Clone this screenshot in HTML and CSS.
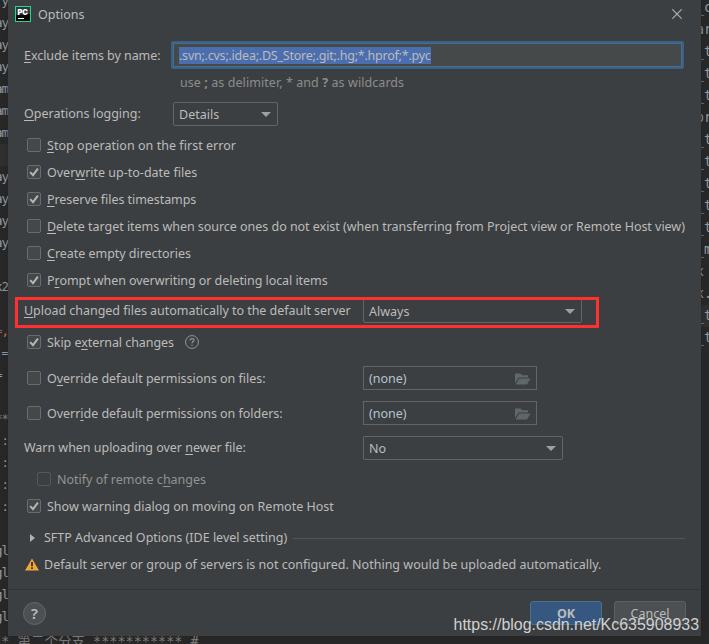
FILE: index.html
```
<!DOCTYPE html>
<html lang="en">
<head>
<meta charset="utf-8">
<title>Options</title>
<link rel="stylesheet" href="styles.css">
</head>
<body>
<svg class="defs" width="0" height="0" aria-hidden="true">
  <symbol id="check" viewBox="0 0 14 14"><path d="M3.2 7.1 6 10.1 10.9 3.6" fill="none" stroke="#b4b6b7" stroke-width="2"/></symbol>
  <symbol id="folder" viewBox="0 0 16 12"><path fill="#5f676b" d="M0 .5h5.5L7 2.3h6v2.2H3.6L0 10.2zM4.2 5.5H15.5L12 11.5H.6z"/></symbol>
</svg>
<main class="screen">
  <div class="gutter"><pre class="code code-left"> y
ay
ay
ay
am
am
am
<span class="current">   </span>
ay
ay
ay
ay

x2

<i class="magenta">=</i><i class="orange">,</i>
 =
= 

<i class="grey">**</i>
 :
 :
 :
 :

gl
gl
gl
gl
</pre></div>
  <section class="dialog">
    <header class="title">
      <svg class="logo" width="16" height="16" viewBox="0 0 16 16"><rect x=".5" y=".5" width="15" height="15" fill="#080808" stroke="#21d789"/><path d="M1 1h14v7L1 9z" fill="#30393b"/><text x="2.4" y="8.8">PC</text><path d="M3 12.5h6" stroke="#fff"/></svg>
      <span class="grow">Options</span>
      <svg width="10" height="10" viewBox="0 0 10 10"><path d="M.3.3 9.7 9.7M9.7.3.3 9.7" stroke="#b0b2b3" stroke-width="1.1"/></svg>
    </header>
    <div class="row exclude"><label class="name"><u>E</u>xclude items by name:</label><div class="input focus"><span class="selection">.svn;.cvs;.idea;.DS_Store;.git;.hg;*.hprof;*.pyc</span></div></div>
    <div class="hint">use <b>;</b> as delimiter, * and <b>?</b> as wildcards</div>
    <div class="row logging"><label class="name"><u>O</u>perations logging:</label><div class="combo small">Details<i class="arrow"></i></div></div>
    <div class="checks">
      <label class="check"><i class="box"></i><span class="loose"><u>S</u>top operation on the first error</span></label>
      <label class="check"><i class="box"><svg><use href="#check"/></svg></i><span>Over<u>w</u>rite up-to-date files</span></label>
      <label class="check"><i class="box"><svg><use href="#check"/></svg></i><span class="tight"><u>P</u>reserve files timestamps</span></label>
      <label class="check"><i class="box"></i><span class="snug"><u>D</u>elete target items when source ones do not exist (when transferring from Project view or Remote Host view)</span></label>
      <label class="check"><i class="box"></i><span class="snug"><u>C</u>reate empty directories</span></label>
      <label class="check"><i class="box"><svg><use href="#check"/></svg></i><span class="tight">P<u>r</u>ompt when overwriting or deleting local items</span></label>
    </div>
    <div class="row upload"><label class="wide snug"><u>U</u>pload changed files automatically to the default server</label><div class="combo large">Always<i class="arrow"></i></div><div class="marker"></div></div>
    <div class="check skip"><i class="box"><svg><use href="#check"/></svg></i><span class="tight">Skip e<u>x</u>ternal changes</span><svg class="tip" width="14" height="14" viewBox="0 0 14 14"><circle cx="7" cy="7" r="6.4" fill="none" stroke="#92989b"/><path d="M5 5.6C5 4.3 5.8 3.6 7 3.6S9 4.3 9 5.4 7 6.7 7 8.3M7 9.5v1.3" fill="none" stroke="#92989b" stroke-width="1.2"/></svg></div>
    <div class="row perms"><div class="check wide"><i class="box"></i><span class="snug">O<u>v</u>erride default permissions on files:</span></div><div class="input file"><span>(none)</span><svg width="16" height="12"><use href="#folder"/></svg></div></div>
    <div class="row perms"><div class="check wide"><i class="box"></i><span class="snug">Overr<u>i</u>de default permissions on folders:</span></div><div class="input file"><span>(none)</span><svg width="16" height="12"><use href="#folder"/></svg></div></div>
    <div class="row warn"><label class="wide snug">Warn when uploading over <u>n</u>ewer file:</label><div class="combo medium">No<i class="arrow"></i></div></div>
    <div class="check notify"><i class="box"></i><span>Notify of remote c<u>h</u>anges</span></div>
    <div class="check show"><i class="box"><svg><use href="#check"/></svg></i><span>Show warning dialog on moving on Remote Host</span></div>
    <div class="row sftp"><i class="expand"></i><span>SFTP Advanced Options (IDE level setting)</span><hr></div>
    <div class="row message"><svg width="14" height="13" viewBox="0 0 14 13"><path d="M7 .4 14 12.6H0z" fill="#f0a732"/><path d="M7 4v4.2M7 9.3V11" stroke="#3c3f41" stroke-width="2"/></svg><span>Default server or group of servers is not configured. Nothing would be uploaded automatically.</span></div>
    <footer class="footer"><button class="help">?</button><button class="btn primary">OK</button><button class="btn">Cancel</button></footer>
  </section>
  <div class="gutter"><pre class="code code-right">_c
ar
_t
_t
_t
or
_t
_t
_t
_t
_t
_m
x
x.
<span class="current">_t</span>
_t</pre></div>
  <div class="code under">** 第二个分支 *********** #</div>
  <div class="watermark">https://blog.csdn.net/Kc635908933</div>
</main>
</body>
</html>
```
FILE: styles.css
```
* { box-sizing: border-box; }
body { margin: 0; background: #2b2b2b; overflow: hidden; font: 12.5px/18px "Noto Sans", "Open Sans", sans-serif; color: #bbb; }
.defs { position: absolute; }
i { font-style: normal; }
u { text-decoration: underline; text-underline-offset: 2px; text-decoration-thickness: 1px; text-decoration-skip-ink: none; }
.loose { letter-spacing: .04px; }
.snug { letter-spacing: -.032px; }
.tight { letter-spacing: -.06px; }
.screen { position: relative; width: 709px; height: 644px; display: grid; grid-template-columns: 8px 693px 8px; overflow: hidden; background: #282828; }
.gutter { height: 644px; overflow: hidden; }
.code { margin: 0; font: 13.3px/22px "DejaVu Sans Mono", "Noto Sans CJK SC", monospace; color: #929da8; }
.code-left { width: 24px; margin: -10px 0 0 -16px; text-align: right; font-size: 12.5px; letter-spacing: -1px; }
.code-right { width: 24px; margin: -3px 0 0 -5px; }
.current { background: #303030; display: inline-block; width: 24px; height: 22px; vertical-align: top; }
.magenta { color: #94558d; }
.orange { color: #cc7832; }
.grey { color: #808080; }
.dialog { height: 636px; background: #3c3f41; padding: 0 16px; display: flex; flex-direction: column; position: relative; box-shadow: 0 0 5px #1c1c1c80; }
.title { height: 28px; display: flex; align-items: center; margin-left: -9px; padding-right: 3px; flex: none; }
.grow { flex: 1; padding: 2px 0 0 7px; }
.logo text { font: 900 7.5px Inter, sans-serif; fill: #fff; }
.row { display: flex; align-items: center; flex: none; white-space: nowrap; }
.name { width: 147px; flex: none; }
.exclude { height: 28px; margin-top: 13px; }
.exclude .name { letter-spacing: -.06px; padding-top: 2px; }
.input { background: #45494a; display: flex; align-items: center; }
.focus { width: 513px; height: 28px; border: 2px solid #3d6185; box-shadow: inset 0 0 0 1px #466d94; border-radius: 2px; padding-left: 6px; }
.selection { background: #4b6eaf; height: 17px; line-height: 17px; letter-spacing: -.23px; }
.hint { height: 26px; line-height: 27px; padding-left: 156px; color: #8c8c8c; flex: none; letter-spacing: .07px; }
.logging { height: 24px; margin-top: 7px; }
.logging .name { width: 149px; }
.combo { height: 24px; border: 1px solid #646464; border-radius: 2px; padding: 1px 6px 0 5px; display: flex; align-items: center; justify-content: space-between; }
.small { width: 105px; }
.large { width: 219px; }
.medium { width: 200px; }
.arrow { border: 5px solid transparent; border-top-color: #9da0a2; border-bottom: 0; }
.checks { margin-top: 6px; display: flex; flex-direction: column; gap: 1px; flex: none; }
.check { height: 26px; display: flex; align-items: center; gap: 6px; padding-left: 3px; flex: none; white-space: nowrap; }
.check > span { padding-top: 2px; }
.box { width: 14px; height: 14px; border: 1px solid #6b6b6b; border-radius: 2px; background: #43494a; flex: none; display: grid; }
.box svg { width: 14px; height: 14px; margin: -1px; }
.upload { height: 24px; margin-top: 6px; position: relative; }
.wide { width: 339px; flex: none; }
.marker { position: absolute; left: -9px; top: -2px; width: 584px; height: 31px; border: 3px solid #ff3030; }
.skip { margin-top: 6px; }
.tip { margin-left: 5px; }
.perms { height: 24px; margin-top: 11px; }
.file { width: 174px; height: 24px; border: 1px solid #646464; background: #3c3f41; padding: 0 5px; justify-content: space-between; color: #b5c4d0; }
.file svg { margin-top: 2px; }
.file span { padding-top: 1px; }
.warn { height: 24px; margin-top: 11px; }
.notify { margin-top: 6px; padding-left: 13px; color: #929292; }
.notify .box { border-color: #55585a; background: none; }
.show { margin-top: 1px; }
.sftp { height: 24px; margin-top: 7px; }
.expand { border: 4px solid transparent; border-left: 5px solid #afb1b3; border-right: 0; margin: 0 9px 0 6px; }
.sftp hr { flex: 1; border: 0; border-top: 1px solid #515456; margin: 1px 0 0 6px; }
.message { height: 24px; margin-top: 3px; gap: 5px; padding-left: 1px; }
.message svg { margin-top: -2px; }
.footer { height: 48px; margin: 12px -16px 0; border-top: 1px solid #313335; padding: 0 15px; display: flex; align-items: center; gap: 12px; }
.btn { width: 72px; height: 24px; font: inherit; color: #bbb; background: #4c5052; border: 1px solid #5e6060; border-radius: 3px; padding: 2px 0 0; }
.primary { background: #365880; border-color: #4c708c; font-weight: 700; }
.help { width: 23px; height: 23px; border: 1px solid #64686a; border-radius: 50%; background: #4c5052; color: #bbb; font: 600 15px/20px "Noto Sans", sans-serif; padding: 0; margin-right: auto; }
.under { position: absolute; left: -7px; top: 629px; white-space: pre; color: #787878; clip-path: inset(7px 0 0 0); font-size: 13.5px; line-height: 24px; }
.watermark { position: absolute; right: 10px; top: 615px; font: 15.95px/20px "Liberation Sans", sans-serif; color: #d0d1d2; white-space: nowrap; }
```
